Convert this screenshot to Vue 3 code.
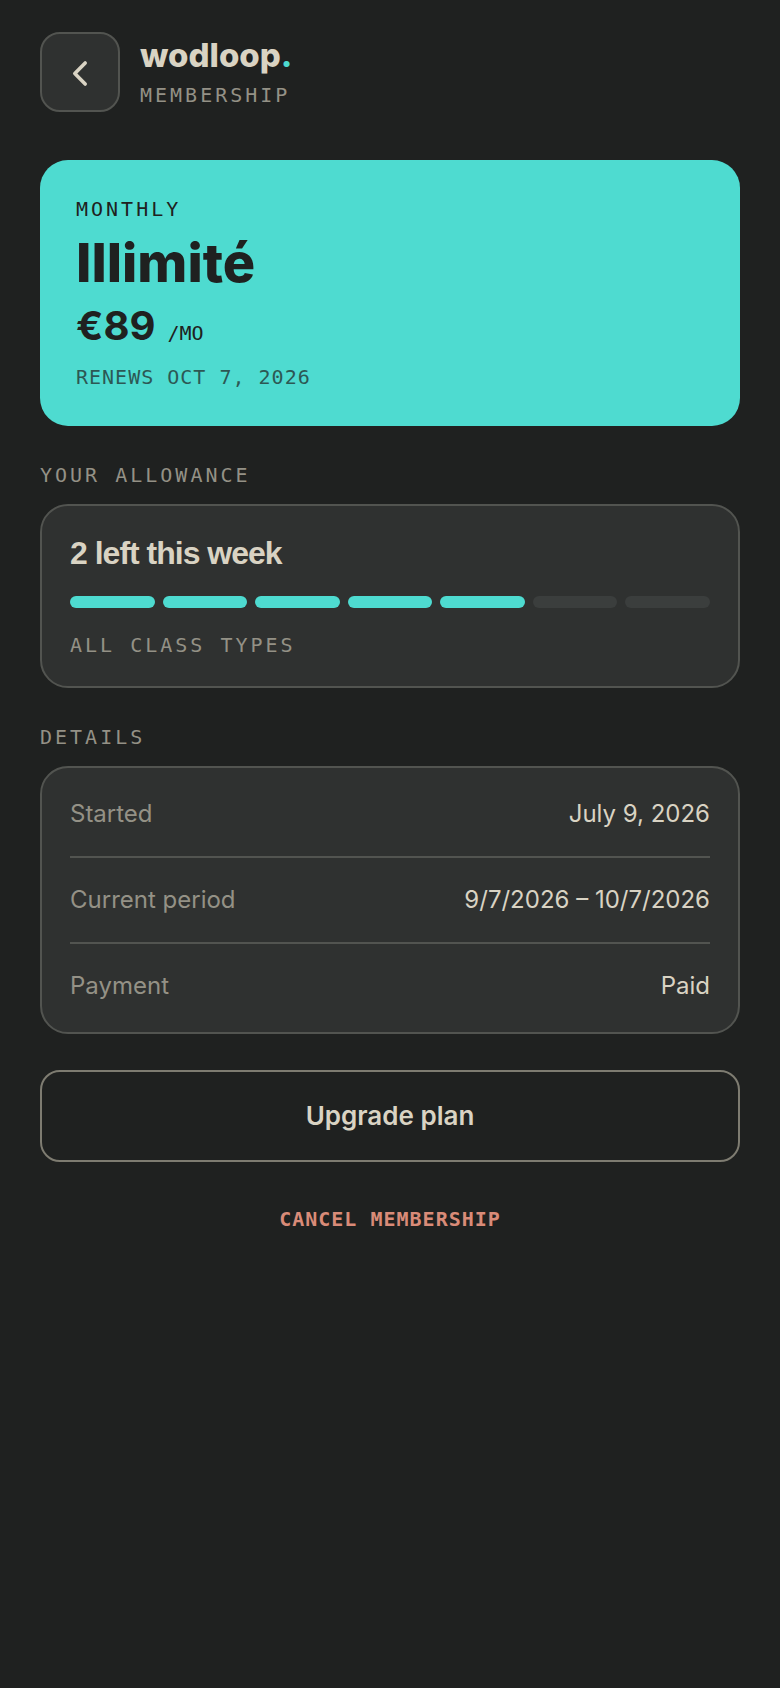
<script setup>
const sessions = [true, true, true, true, true, false, false]
const details = [
  { label: 'Started', value: 'July 9, 2026' },
  { label: 'Current period', value: '9/7/2026 – 10/7/2026' },
  { label: 'Payment', value: 'Paid' },
]
</script>

<template>
  <main class="page">
    <header class="top">
      <button class="back" type="button" aria-label="Back">
        <svg viewBox="0 0 32 32" width="32" height="32" aria-hidden="true">
          <path d="M21.2 7 L10.8 17.5 L21.2 28" />
        </svg>
      </button>
      <div class="brand">
        <h1 class="logo">wodloop<span class="dot">.</span></h1>
        <p class="mono muted">MEMBERSHIP</p>
      </div>
    </header>

    <section class="plan">
      <p class="mono">MONTHLY</p>
      <h2 class="plan-name">Illimité</h2>
      <p class="price">€89 <span class="per">/MO</span></p>
      <p class="renews">RENEWS OCT 7, 2026</p>
    </section>

    <section class="group">
      <h3 class="mono muted">YOUR ALLOWANCE</h3>
      <div class="card allowance">
        <p class="left">2 left this week</p>
        <div class="bars">
          <span v-for="(on, i) in sessions" :key="i" class="bar" :class="{ on }"></span>
        </div>
        <p class="mono muted">ALL CLASS TYPES</p>
      </div>
    </section>

    <section class="group">
      <h3 class="mono muted">DETAILS</h3>
      <dl class="card details">
        <div v-for="row in details" :key="row.label" class="row">
          <dt>{{ row.label }}</dt>
          <dd>{{ row.value }}</dd>
        </div>
      </dl>
    </section>

    <button class="upgrade" type="button">Upgrade plan</button>
    <button class="cancel" type="button">CANCEL MEMBERSHIP</button>
  </main>
</template>

<style>
body {
  background: #1f2120;
}
</style>

<style scoped>
.page {
  box-sizing: border-box;
  min-height: 100vh;
  padding: 32px 40px;
  display: flex;
  flex-direction: column;
  background: #1f2120;
  color: #d9d3c3;
  font-family: Inter, "Liberation Sans", sans-serif;
}
h1, h2, h3, p, dl, dd {
  margin: 0;
}
.mono, .per, .renews, .cancel {
  font-family: "DejaVu Sans Mono", monospace;
  font-size: 20px;
  font-weight: 400;
  line-height: 26px;
}
.mono {
  letter-spacing: 3px;
}
.muted {
  color: #949186;
}
.top {
  display: flex;
  align-items: center;
  gap: 20px;
  margin-bottom: 48px;
}
.back {
  box-sizing: border-box;
  width: 80px;
  height: 80px;
  padding: 0;
  display: flex;
  align-items: center;
  justify-content: center;
  border: 2px solid #525450;
  border-radius: 20px;
  background: #2f3130;
}
.back path {
  fill: none;
  stroke: #d9d3c3;
  stroke-width: 3.6;
  stroke-linecap: round;
  stroke-linejoin: round;
}
.brand {
  display: flex;
  flex-direction: column;
  gap: 8px;
}
.logo {
  font-size: 33px;
  font-weight: 800;
  line-height: 38px;
}
.dot {
  color: #4edbd0;
}
.plan {
  display: flex;
  flex-direction: column;
  gap: 8px;
  padding: 36px;
  border-radius: 28px;
  background: #4edbd0;
  color: #1f2120;
}
.plan-name {
  font-size: 54px;
  font-weight: 800;
  line-height: 66px;
}
.price {
  display: flex;
  align-items: baseline;
  gap: 12px;
  font-size: 40px;
  font-weight: 700;
  line-height: 44px;
}
.renews {
  margin-top: 8px;
  letter-spacing: 1px;
  opacity: 0.7;
}
.group {
  display: flex;
  flex-direction: column;
  gap: 16px;
  margin-top: 36px;
}
.card {
  border: 2px solid #525450;
  border-radius: 28px;
  background: #2f3130;
}
.allowance {
  display: flex;
  flex-direction: column;
  gap: 24px;
  padding: 28px;
}
.left {
  font-family: "Liberation Sans", sans-serif;
  font-size: 32px;
  font-weight: 700;
  line-height: 38px;
  letter-spacing: -1px;
}
.bars {
  display: flex;
  gap: 8px;
}
.bar {
  flex: 1;
  height: 12px;
  border-radius: 6px;
  background: #3b3e3d;
}
.bar.on {
  background: #4edbd0;
}
.details {
  padding: 4px 28px;
}
.row {
  display: flex;
  justify-content: space-between;
  padding: 28px 0;
  font-size: 24px;
  line-height: 28px;
}
.row + .row {
  border-top: 2px solid #525450;
}
.row dt {
  color: #949186;
}
.upgrade {
  margin-top: 36px;
  padding: 28px;
  border: 2px solid #7e7c71;
  border-radius: 20px;
  background: transparent;
  color: #d9d3c3;
  font-family: Inter, "Liberation Sans", sans-serif;
  font-size: 26px;
  font-weight: 600;
  line-height: 32px;
}
.cancel {
  align-self: center;
  margin-top: 32px;
  padding: 12px 24px;
  border: 0;
  background: transparent;
  color: #d98b78;
  font-weight: 700;
  letter-spacing: 1px;
}
</style>
